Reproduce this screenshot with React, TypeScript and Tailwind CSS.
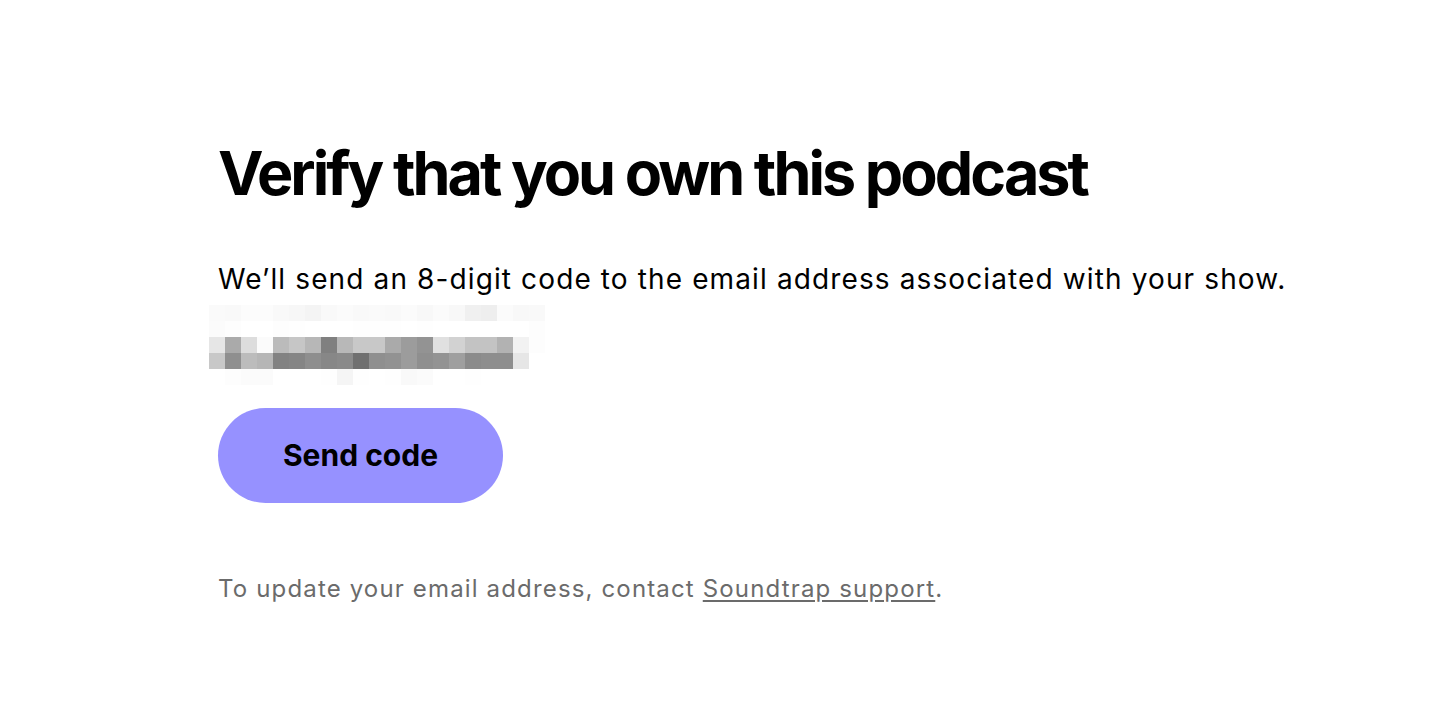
const redacted: string[][] = [
  ["#fafafa", "#f9f9f9", "#fcfcfc", "#fcfcfc", "#f9f9f9", "#f7f7f7", "#f4f4f4", "#f9f9f9", "#fbfbfb", "#f9f9f9", "#fafafa", "#f9f9f9", "#fbfbfb", "#f8f8f8", "#fbfbfb", "#f8f8f8", "#f0f0f0", "#eeeeee", "#fbfbfb", "#f8f8f8", "#f9f9f9", "#ffffff"],
  ["#fbfbfb", "#fdfdfd", "#ffffff", "#ffffff", "#fdfdfd", "#fefefe", "#ffffff", "#ffffff", "#ffffff", "#fefefe", "#fefefe", "#fefefe", "#ffffff", "#fefefe", "#ffffff", "#ffffff", "#ffffff", "#ffffff", "#ffffff", "#ffffff", "#fdfdfd", "#ffffff"],
  ["#e6e6e6", "#aaaaaa", "#dddddd", "#fbfbfb", "#bbbbbb", "#c6c6c6", "#b7b7b7", "#808080", "#b8b8b8", "#c8c8c8", "#c8c8c8", "#aaaaaa", "#9c9c9c", "#939393", "#e0e0e0", "#d2d2d2", "#c3c3c3", "#c3c3c3", "#b2b2b2", "#f2f2f2", "#fdfdfd", "#ffffff"],
  ["#c8c8c8", "#8f8f8f", "#bcbcbc", "#b6b6b6", "#828282", "#858585", "#8e8e8e", "#878787", "#8a8a8a", "#707070", "#8f8f8f", "#929292", "#9c9c9c", "#8f8f8f", "#939393", "#9f9f9f", "#8b8b8b", "#8e8e8e", "#8e8e8e", "#e6e6e6", "#ffffff", "#ffffff"],
  ["#ffffff", "#fdfdfd", "#fbfbfb", "#fbfbfb", "#ffffff", "#ffffff", "#ffffff", "#fefefe", "#f5f5f5", "#fefefe", "#ffffff", "#fefefe", "#f9f9f9", "#fbfbfb", "#ffffff", "#ffffff", "#fefefe", "#ffffff", "#ffffff", "#ffffff", "#ffffff", "#ffffff"],
];

// Pixelated email address (redacted in the screenshot)
function RedactedEmail() {
  return (
    <div className="flex flex-col -ml-[9px]">
      {redacted.map((row, r) => (
        <div key={r} className="flex">
          {row.map((c, i) => (
            <div key={i} className="h-4 w-4" style={{ backgroundColor: c }} />
          ))}
        </div>
      ))}
    </div>
  );
}

export default function App() {
  return (
    <main className="min-h-[724px] bg-white pl-[218px] pt-[137px] text-black">
      <h1 className="font-['Inter',sans-serif] text-[61px] font-bold leading-[72px] tracking-[-0.048em]">
        Verify that you own this podcast
      </h1>

      <p className="mt-[52px] font-['Inter',sans-serif] text-[28px] leading-[36px] tracking-[0.04em]">
        We’ll send an 8-digit code to the email address associated with your show.
      </p>

      <div className="mt-[8px]">
        <RedactedEmail />
      </div>

      <button className="mt-[23px] flex h-[95px] w-[285px] items-center justify-center rounded-full bg-[#9691ff] font-['Inter',sans-serif] text-[30px] font-bold tracking-[0em] text-black">
        Send code
      </button>

      <p className="mt-[70px] font-['Inter',sans-serif] text-[24px] leading-[32px] tracking-[0.048em] text-[#6b6b6b]">
        To update your email address, contact{" "}
        <a href="#" className="underline underline-offset-[3px]">
          Soundtrap support
        </a>
        .
      </p>
    </main>
  );
}
